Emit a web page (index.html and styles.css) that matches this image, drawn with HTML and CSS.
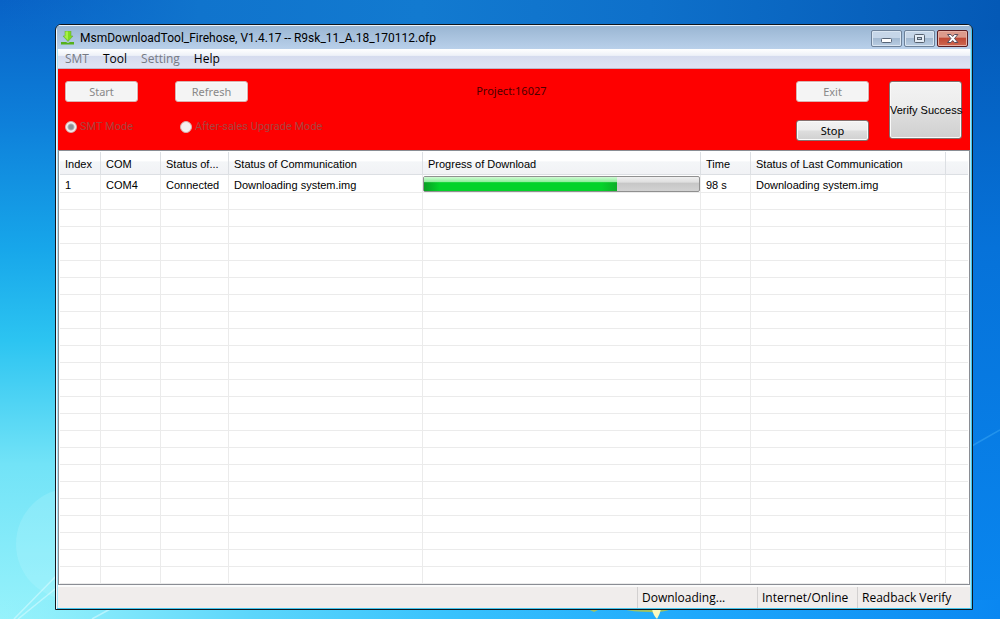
FILE: index.html
```html
<!DOCTYPE html>
<html lang="en">
<head>
<meta charset="utf-8">
<title>MsmDownloadTool_Firehose</title>
<link rel="stylesheet" href="styles.css">
</head>
<body>
<svg class="wallpaper" viewBox="0 0 1000 619" preserveAspectRatio="none" aria-hidden="true">
  <defs>
    <linearGradient id="sky" x1="0" y1="0" x2="0" y2="1">
      <stop offset="0" stop-color="#0862c6"/><stop offset=".2" stop-color="#0e80da"/>
      <stop offset=".4" stop-color="#17a6ea"/><stop offset=".55" stop-color="#2cc4f1"/>
      <stop offset=".75" stop-color="#72e3f7"/><stop offset="1" stop-color="#96f2fb"/>
    </linearGradient>
    <linearGradient id="deep" x1="0" y1="0" x2="0" y2="1">
      <stop offset="0" stop-color="#0459b6"/><stop offset=".4" stop-color="#0672d9"/><stop offset="1" stop-color="#0987f0"/>
    </linearGradient>
    <linearGradient id="bottom" x1="0" y1="0" x2="1" y2="0">
      <stop offset="0" stop-color="#8eeefb" stop-opacity="0"/><stop offset=".1" stop-color="#84e9fb"/><stop offset=".25" stop-color="#5cd6fb"/><stop offset=".45" stop-color="#38c2fd"/>
      <stop offset=".7" stop-color="#1ea8fc"/><stop offset="1" stop-color="#0a87f1"/>
    </linearGradient>
    <linearGradient id="top" x1="0" y1="0" x2="1" y2="0">
      <stop offset="0" stop-color="#0e70cb" stop-opacity="0"/><stop offset=".2" stop-color="#1074cd"/><stop offset=".42" stop-color="#127ad0"/><stop offset=".65" stop-color="#0e70ca"/>
      <stop offset="1" stop-color="#0459b6"/>
    </linearGradient>
  </defs>
  <rect width="1000" height="619" fill="url(#sky)"/>
  <rect x="500" width="500" height="619" fill="url(#deep)"/>
  <rect width="1000" height="30" fill="url(#top)"/>
  <rect y="600" width="1000" height="19" fill="url(#bottom)"/>
  <circle cx="72" cy="544" r="56" fill="#c8f8fd" opacity=".2"/>
  <path d="M14 619 60 572M92 619 112 608M18 619 60 585" stroke="#d6fbff" stroke-width="1.5" opacity=".6"/>
  <path d="M970 447 1000 430" stroke="#4ab4f8" stroke-width="1.5" opacity=".4"/>
  <path d="M590 610h8l-4 2zM622 609h50q-12 4-22 3-18 0-28-3z" fill="#9fc162"/>
  <path d="M652 609h9q-1 5-4 10-4-4-5-10z" fill="#fcfac0"/>
</svg>
<main class="window">
  <header class="titlebar">
    <svg class="app-icon" viewBox="0 0 14 14" aria-hidden="true">
      <path d="M4 0h6v5h2L7 10.500 2 5h2z" fill="#7ddb1e" stroke="#6aa840" stroke-width=".6"/>
      <path d="M4.500.5H7V9L3 5.300h1.500z" fill="#a6ee48"/>
      <path d="M0 11h5l2 1 2-1h4v2.500H0z" fill="#55b01a"/>
    </svg>
    <h1 class="title">MsmDownloadTool_Firehose, V1.4.17 -- R9sk_11_A.18_170112.ofp</h1>
    <div class="controls">
      <button class="control" aria-label="Minimize"><svg viewBox="0 0 29 15"><rect x="9.500" y="7.500" width="10" height="4" rx="1" fill="#fff" stroke="#566476"/></svg></button>
      <button class="control" aria-label="Maximize"><svg viewBox="0 0 29 15"><rect x="9.500" y="3.500" width="10" height="8" rx="1" fill="#e5edf6" stroke="#56616f"/><rect x="12.500" y="6.500" width="4" height="2" fill="#c0cedd" stroke="#56616f"/></svg></button>
      <button class="control close" aria-label="Close"><svg viewBox="0 0 29 15"><path d="M9.500 3.500h3.400l1.800 2 1.800-2h3.400l-3.400 4 3.400 4h-3.400l-1.800-2-1.800 2H9.500l3.400-4z" fill="#fff" stroke="#564c5c"/></svg></button>
    </div>
  </header>
  <nav class="menubar">
    <button class="menu" disabled>SMT</button>
    <button class="menu">Tool</button>
    <button class="menu" disabled>Setting</button>
    <button class="menu">Help</button>
  </nav>
  <section class="panel">
    <div class="modes">
      <button class="btn" disabled>Start</button>
      <button class="btn" disabled>Refresh</button>
      <label class="mode"><input type="radio" name="mode" checked disabled>SMT Mode</label>
      <label class="mode"><input type="radio" name="mode" disabled>After-sales Upgrade Mode</label>
    </div>
    <p class="project">Project:16027</p>
    <div class="actions">
      <button class="btn" disabled>Exit</button>
      <button class="btn">Stop</button>
    </div>
    <button class="btn verify">Verify Success</button>
  </section>
  <section class="list">
    <table class="grid">
      <colgroup><col class="c-index"><col class="c-com"><col class="c-conn"><col class="c-status"><col class="c-progress"><col class="c-time"><col class="c-last"><col></colgroup>
      <thead><tr><th>Index</th><th>COM</th><th>Status of...</th><th>Status of Communication</th><th>Progress of Download</th><th>Time</th><th>Status of Last Communication</th><th></th></tr></thead>
      <tbody>
        <tr><td>1</td><td>COM4</td><td>Connected</td><td>Downloading system.img</td><td class="bar-cell"><div class="bar" role="progressbar" aria-label="Progress of Download" aria-valuenow="70"><div class="fill" style="width:70%"></div></div></td><td>98 s</td><td>Downloading system.img</td><td></td></tr>
      </tbody>
      <tbody id="empty-rows"></tbody>
    </table>
  </section>
  <footer class="status">
    <span class="pane state">Downloading...</span>
    <span class="pane net">Internet/Online</span>
    <span class="pane readback">Readback Verify</span>
  </footer>
</main>
<script src="rows.js"></script>
</body>
</html>
```
FILE: rows.js
```js
const body = document.getElementById("empty-rows");
for (let i = 0; i < 23; i++) {
  const row = body.insertRow();
  for (let c = 0; c < 8; c++) row.insertCell();
}
```
FILE: styles.css
```css
* { box-sizing: border-box; }
body {
  margin: 0;
  min-height: 100vh;
  padding: 24px 27px 9px 55px;
  display: flex;
  font: 11px/14px "Liberation Sans", sans-serif;
  color: #000;
}
button { font: inherit; color: inherit; padding: 0; }
.wallpaper { position: fixed; inset: 0; width: 100%; height: 100%; z-index: -1; }
.window {
  flex: 1;
  min-width: 0;
  display: flex;
  flex-direction: column;
  padding: 0 2px 1px;
  border: 1px solid #10151c;
  border-radius: 6px 6px 0 0;
  background: #a9e4f8;
  box-shadow: inset 1px 1px #f4faff, inset -1px -1px #45c6ee;
  overflow: hidden;
}
.titlebar {
  display: flex;
  align-items: center;
  height: 24px;
  margin: 0 -1px;
  padding: 1px 3px 0 4px;
  border-top: 1px solid #eef5fb;
  background: linear-gradient(#9ab6d3, #b9d0ea);
}
.app-icon { width: 14px; height: 14px; }
.title {
  flex: 1;
  margin: 0 0 0 5px;
  font: 12px/20px Roboto, sans-serif;
  white-space: nowrap;
}
.controls { display: flex; gap: 2px; }
.control {
  width: 31px;
  height: 17px;
  border: 1px solid #6d8199;
  border-radius: 2px;
  background: linear-gradient(#c6d6e8 45%, #a3b9d1 50%, #b9cde2);
  box-shadow: inset 0 0 0 1px #dae6f2;
}
.control svg { display: block; width: 100%; height: 100%; }
.close {
  border-color: #5a1d22;
  background: linear-gradient(#dc9a8c 40%, #c04a36 50%, #cf6850);
  box-shadow: inset 0 0 0 1px #e7b0a4;
}
.menubar {
  display: flex;
  gap: 14px;
  height: 20px;
  padding: 0 7px;
  border-bottom: 1px solid #bcb6c8;
  background: linear-gradient(#fff, #eef1f8 34%, #d5dbee 36%, #dfe4f3);
  font: 12px/19px "Open Sans", sans-serif;
}
.menu { border: 0; background: none; }
.menu:disabled { color: #767a84; }
.panel {
  display: flex;
  align-items: flex-start;
  height: 81px;
  padding: 12px 8px 0 7px;
  background: #fe0000;
  font-family: "Noto Sans", sans-serif;
}
.modes {
  flex: 9;
  display: grid;
  grid-template-columns: 110px auto;
  justify-content: start;
  row-gap: 18px;
}
.btn {
  width: 73px;
  height: 21px;
  border: 1px solid #85706e;
  border-radius: 3px;
  background: linear-gradient(#f3f3f3, #ececec 48%, #dedede 52%, #d0d0d0);
  box-shadow: inset 0 0 0 1px #fafafa;
}
.btn:disabled { border-color: #d9b3b1; background: #f4f4f4; color: #888; }
.mode {
  display: flex;
  align-items: center;
  gap: 3px;
  color: #a8443f;
  font-family: Roboto, sans-serif;
  white-space: nowrap;
}
.mode input {
  appearance: none;
  width: 12px;
  height: 12px;
  margin: 0;
  border: 1px solid #d8b0ae;
  border-radius: 50%;
  background: #f4f0f0;
}
.mode input:checked { background: radial-gradient(#8b9098 0 2px, #b0b2b6 3px, #f4f0f0 4px); }
.mode:last-child { padding-left: 5px; }
.project { flex: 7; margin: 3px 0 0; color: #4a0000; }
.actions { display: grid; gap: 18px; margin-right: 20px; }
.verify { height: 58px; font-family: "Liberation Sans", sans-serif; white-space: nowrap; }
.list {
  flex: 1;
  min-height: 0;
  padding: 1px 1px 0;
  border: 1px solid #8a8d94;
  background: #fff;
  overflow: hidden;
}
.grid { width: 100%; table-layout: fixed; border-collapse: separate; border-spacing: 0; }
.c-index { width: 41px; }
.c-com { width: 60px; }
.c-conn { width: 68px; }
.c-status { width: 194px; }
.c-progress { width: 278px; }
.c-time { width: 50px; }
.c-last { width: 195px; }
th, td {
  padding: 2px 0 0 5px;
  text-align: left;
  font-weight: normal;
  white-space: nowrap;
  overflow: hidden;
  border-right: 1px solid #ebebeb;
  border-bottom: 1px solid #ebebeb;
}
th {
  height: 23px;
  border-color: #dcdfe3;
  background: linear-gradient(#fff 40%, #f4f6f8 45%, #f1f2f5);
}
td { height: 17px; }
tbody:first-of-type td { height: 18px; }
th:last-child, td:last-child { border-right: 0; }
td.bar-cell { padding: 1px 0 0; }
.bar {
  height: 16px;
  border: 1px solid #909090;
  border-radius: 2px;
  background: linear-gradient(#f0f0f0, #dedede 38%, #c6c6c6 42%, #d2d2d2);
}
.fill {
  height: 100%;
  background: linear-gradient(#d0fbd4, #8eee9a 36%, transparent 40%), linear-gradient(90deg, #0a9e24, #04d22a 8% 92%, #0eae28);
}
.status {
  display: flex;
  justify-content: flex-end;
  height: 23px;
  border-top: 2px solid #fbfbfb;
  background: #f0edec;
  font: 12px/22px "Open Sans", sans-serif;
}
.pane { height: 21px; padding-left: 4px; border-left: 1px solid #d2d0d0; white-space: nowrap; }
.state { width: 120px; }
.net { width: 100px; }
.readback { width: 113px; }
```
